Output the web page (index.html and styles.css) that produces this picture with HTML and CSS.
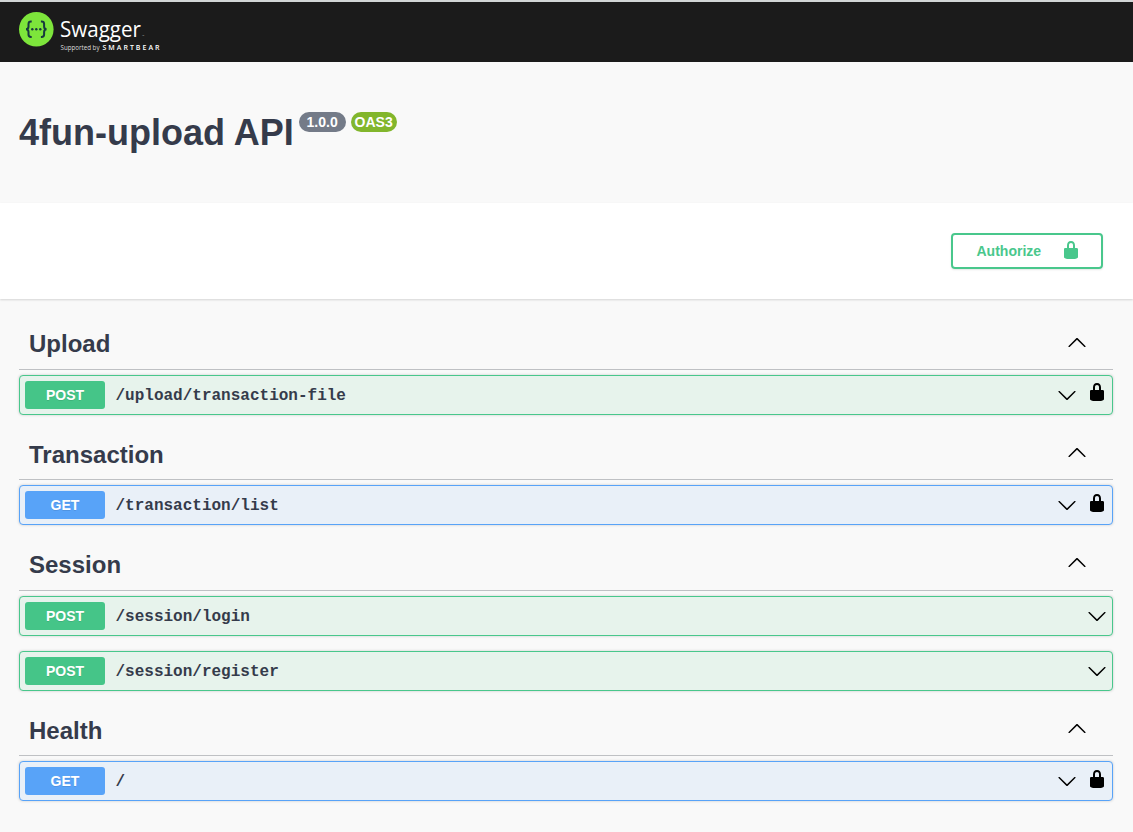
FILE: index.html
```html
<!DOCTYPE html>
<html lang="en">
<head>
<meta charset="utf-8">
<title>4fun-upload API</title>
<link rel="stylesheet" href="styles.css">
</head>
<body>
<svg class="defs" width="0" height="0" aria-hidden="true">
  <symbol id="lock" viewBox="0 0 20 20"><path d="M15.8 8H14V5.6C14 2.703 12.665 1 10 1 7.334 1 6 2.703 6 5.6V8H4c-.553 0-1 .646-1 1.199V17c0 .549.428 1.139.951 1.307l1.197.387C5.672 18.861 6.55 19 7.1 19h5.8c.549 0 1.428-.139 1.951-.307l1.196-.387c.524-.167.953-.757.953-1.306V9.199C17 8.646 16.352 8 15.8 8zM12 8H8V5.199C8 3.754 8.797 3 10 3c1.203 0 2 .754 2 2.199V8z"/></symbol>
  <symbol id="down" viewBox="0 0 20 20"><path d="M17.418 6.109c.272-.268.709-.268.979 0s.271.701 0 .969l-7.908 7.83c-.27.268-.707.268-.979 0l-7.908-7.83c-.27-.268-.27-.701 0-.969.271-.268.709-.268.979 0L10 13.25z"/></symbol>
  <symbol id="up" viewBox="0 0 20 20"><path d="M17.418 14.908c.272.27.709.27.979 0s.271-.701 0-.969l-7.908-7.83c-.27-.268-.707-.268-.979 0l-7.908 7.83c-.27.268-.27.701 0 .969.271.268.709.268.979 0L10 7.767z"/></symbol>
</svg>
<header class="topbar">
  <svg class="logo" width="144" height="44" viewBox="0 0 144 44">
    <circle cx="17.3" cy="17.3" r="17.3" fill="#7de53b"/>
    <g fill="none" stroke="#17383f" stroke-width="2">
      <path d="M12.700 9.600H12C10.400 9.600 9.500 10.400 9.500 12V14.500C9.500 16.300 8.800 17.300 7 17.300C8.800 17.300 9.500 18.300 9.500 20.100V22.600C9.500 24.200 10.400 25 12 25H12.700"/>
      <path d="M21.900 9.600H22.600C24.200 9.600 25.100 10.400 25.100 12V14.500C25.100 16.300 25.800 17.300 27.600 17.300C25.800 17.300 25.100 18.300 25.100 20.100V22.600C25.100 24.200 24.200 25 22.600 25H21.900"/>
    </g>
    <g fill="#17383f"><circle cx="13.300" cy="17.300" r="1.200"/><circle cx="17.300" cy="17.300" r="1.200"/><circle cx="21.300" cy="17.300" r="1.200"/></g>
    <text class="logo-name" x="41" y="24.500" textLength="81" lengthAdjust="spacingAndGlyphs">Swagger</text>
    <text class="logo-tm" x="123" y="25">™</text>
    <text class="logo-by" x="41.500" y="38" textLength="39" lengthAdjust="spacingAndGlyphs">Supported by</text>
    <text class="logo-bear" x="83.500" y="38" textLength="57" lengthAdjust="spacing">SMARTBEAR</text>
  </svg>
</header>
<section class="info">
  <h1 class="title">4fun-upload API</h1>
  <span class="badge version">1.0.0</span>
  <span class="badge oas">OAS3</span>
</section>
<section class="schemes">
  <button class="authorize"><span>Authorize</span><svg class="icon"><use href="#lock"/></svg></button>
</section>
<main class="tags">
  <section class="tag">
    <h2 class="tag-head"><span>Upload</span><svg class="icon"><use href="#up"/></svg></h2>
    <div class="op post"><span class="method">POST</span><span class="path">/upload/transaction-file</span><svg class="icon"><use href="#down"/></svg><svg class="icon lock"><use href="#lock"/></svg></div>
  </section>
  <section class="tag">
    <h2 class="tag-head"><span>Transaction</span><svg class="icon"><use href="#up"/></svg></h2>
    <div class="op get"><span class="method">GET</span><span class="path">/transaction/list</span><svg class="icon"><use href="#down"/></svg><svg class="icon lock"><use href="#lock"/></svg></div>
  </section>
  <section class="tag">
    <h2 class="tag-head"><span>Session</span><svg class="icon"><use href="#up"/></svg></h2>
    <div class="op post"><span class="method">POST</span><span class="path">/session/login</span><svg class="icon"><use href="#down"/></svg></div>
    <div class="op post"><span class="method">POST</span><span class="path">/session/register</span><svg class="icon"><use href="#down"/></svg></div>
  </section>
  <section class="tag tag-last">
    <h2 class="tag-head"><span>Health</span><svg class="icon"><use href="#up"/></svg></h2>
    <div class="op get"><span class="method">GET</span><span class="path">/</span><svg class="icon"><use href="#down"/></svg><svg class="icon lock"><use href="#lock"/></svg></div>
  </section>
</main>
</body>
</html>
```

FILE: styles.css
```css
* { box-sizing: border-box; }
body {
  margin: 0;
  height: 832px;
  overflow: hidden;
  background: #f9f9f9;
  color: #353b4b;
  font-family: "Liberation Sans", Arial, sans-serif;
}
.defs { display: none; }
.icon { width: 20px; height: 20px; flex: none; }

.topbar {
  height: 62px;
  padding: 10px 19px 0;
  border-top: 2px solid #d2d5d5;
  background: #1b1b1b;
}
.logo { display: block; }
.logo text { font-family: "Open Sans", sans-serif; fill: #fff; }
.logo .logo-name { font-size: 22.5px; font-weight: 400; }
.logo .logo-tm { font-size: 3px; fill: #aaa; }
.logo .logo-by { font-size: 6.5px; fill: #ddd; }
.logo .logo-bear { font-size: 7px; font-weight: 600; }

.info {
  display: flex;
  align-items: flex-start;
  height: 141px;
  padding: 50px 19px 0;
}
.title {
  margin: 0 5px 0 0;
  font-size: 36px;
  line-height: 41px;
  font-weight: 700;
}
.badge {
  height: 20px;
  border-radius: 10px;
  color: #fff;
  font-size: 14px;
  line-height: 20px;
  font-weight: 700;
  text-align: center;
}
.version { width: 47px; margin-right: 5px; background: #747b88; }
.oas { width: 46px; background: #82b62c; }

.schemes {
  display: flex;
  justify-content: flex-end;
  height: 96px;
  padding: 30px 30px 0;
  background: #fff;
  box-shadow: 0 1px 2px rgba(0, 0, 0, .15);
}
.authorize {
  display: flex;
  align-items: center;
  justify-content: space-between;
  width: 152px;
  height: 36px;
  padding: 0 20px 0 23.5px;
  border: 2px solid #49c78c;
  border-radius: 4px;
  background: transparent;
  box-shadow: 0 1px 2px rgba(0, 0, 0, .1);
  color: #49c78c;
  font: 700 14px "Liberation Sans", Arial, sans-serif;
}
.authorize .icon { fill: #49c78c; margin-top: -2px; }

.tags { padding: 20.67px 20px 0 19px; }
.tag-head {
  display: flex;
  align-items: center;
  justify-content: space-between;
  height: 50.33px;
  margin: 0 0 5px;
  padding: 0 26px 0 10px;
  border-bottom: 1px solid #bfc1c4;
  font-size: 24px;
  line-height: 28px;
  font-weight: 700;
}
.tag-head .icon { margin-top: -5px; }
.tag-last .tag-head { padding-top: 1px; }
.op {
  display: flex;
  align-items: center;
  height: 40px;
  margin-bottom: 15px;
  padding: 0 5px;
  border: 1px solid;
  border-radius: 4px;
  box-shadow: 0 0 3px rgba(0, 0, 0, .19);
}
.post { border-color: #49c78c; background: #e7f3ec; }
.get { border-color: #58a3f8; background: #e9f0f8; }
.method {
  width: 80px;
  height: 28px;
  border-radius: 3px;
  color: #fff;
  font-size: 14px;
  line-height: 28px;
  font-weight: 700;
  text-align: center;
  text-shadow: 0 1px 0 rgba(0, 0, 0, .1);
}
.post .method { background: #45c588; }
.get .method { background: #58a3f8; }
.path {
  flex: 1;
  padding: 2px 0 0 10.5px;
  font: 700 16px "Liberation Mono", monospace;
}
.lock { margin: -5px 0 0 10px; }
.tag-last .lock { margin-top: -4px; }
```
